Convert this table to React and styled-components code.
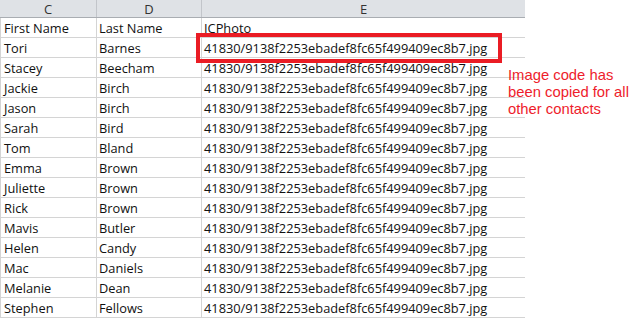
import styled, { createGlobalStyle } from "styled-components"

const GlobalStyle = createGlobalStyle`
  html, body {
    margin: 0;
    padding: 0;
    background: #fff;
  }
`

const columns = [
  { letter: "C", width: 97 },
  { letter: "D", width: 105 },
  { letter: "E", width: 323 },
]

const code = "41830/9138f2253ebadef8fc65f499409ec8b7.jpg"

const rows = [
  [ "First Name", "Last Name", "ICPhoto" ],
  [ "Tori", "Barnes", code ],
  [ "Stacey", "Beecham", code ],
  [ "Jackie", "Birch", code ],
  [ "Jason", "Birch", code ],
  [ "Sarah", "Bird", code ],
  [ "Tom", "Bland", code ],
  [ "Emma", "Brown", code ],
  [ "Juliette", "Brown", code ],
  [ "Rick", "Brown", code ],
  [ "Mavis", "Butler", code ],
  [ "Helen", "Candy", code ],
  [ "Mac", "Daniels", code ],
  [ "Melanie", "Dean", code ],
  [ "Stephen", "Fellows", code ],
]

const Page = styled.div`
  position: relative;
  width: 630px;
  height: 319px;
  overflow: hidden;
  background: #fff;
  font-family: "Open Sans", "Liberation Sans", sans-serif;
`

const Sheet = styled.div`
  display: flex;
  flex-direction: column;
  width: 525px;
`

const HeaderRow = styled.div`
  display: flex;
  height: 17px;
  background: #dfe2e6;
  border-bottom: 1px solid #a9adb2;
`

const HeaderCell = styled.div`
  display: flex;
  justify-content: center;
  align-items: center;
  width: ${ props => props.width }px;
  box-sizing: border-box;
  border-right: ${ props => props.last ? "none" : "1px solid #c2c5ca" };
  font-size: 13px;
  color: #333;
`

const Row = styled.div`
  display: flex;
  height: 19px;
  border-bottom: 1px solid #d4d4d4;
`

const Cell = styled.div`
  display: flex;
  align-items: flex-end;
  width: ${ props => props.width }px;
  box-sizing: border-box;
  padding: 0 0 0 ${ props => props.first ? 3 : 2 }px;
  border-left: ${ props => props.first ? "1px solid #d4d4d4" : "none" };
  border-right: ${ props => props.last ? "none" : "1px solid #d4d4d4" };
  font-size: 12.8px;
  line-height: 18px;
  color: #111;
  white-space: nowrap;
  overflow: visible;
`

const Highlight = styled.div`
  position: absolute;
  left: 196px;
  top: 33px;
  width: 306px;
  height: 30px;
  box-sizing: border-box;
  border: 4px solid #ea1c24;
`

const Note = styled.div`
  position: absolute;
  left: 508px;
  top: 67px;
  font-family: "Liberation Sans", Arial, sans-serif;
  font-size: 14.8px;
  line-height: 17px;
  color: #ee1c2b;
`

function App() {
  return (
    <Page>
      <GlobalStyle />
      <Sheet>
        <HeaderRow>
          { columns.map((c, i) => (
            <HeaderCell key={ c.letter } width={ c.width } last={ i === columns.length - 1 }>{ c.letter }</HeaderCell>
          )) }
        </HeaderRow>
        { rows.map((r, ri) => (
          <Row key={ ri }>
            { r.map((v, ci) => (
              <Cell key={ ci } width={ columns[ ci ].width } first={ ci === 0 } last={ ci === r.length - 1 }>{ v }</Cell>
            )) }
          </Row>
        )) }
      </Sheet>
      <Highlight />
      <Note>Image code has<br />been copied for all<br />other contacts</Note>
    </Page>
  )
}

export default App
